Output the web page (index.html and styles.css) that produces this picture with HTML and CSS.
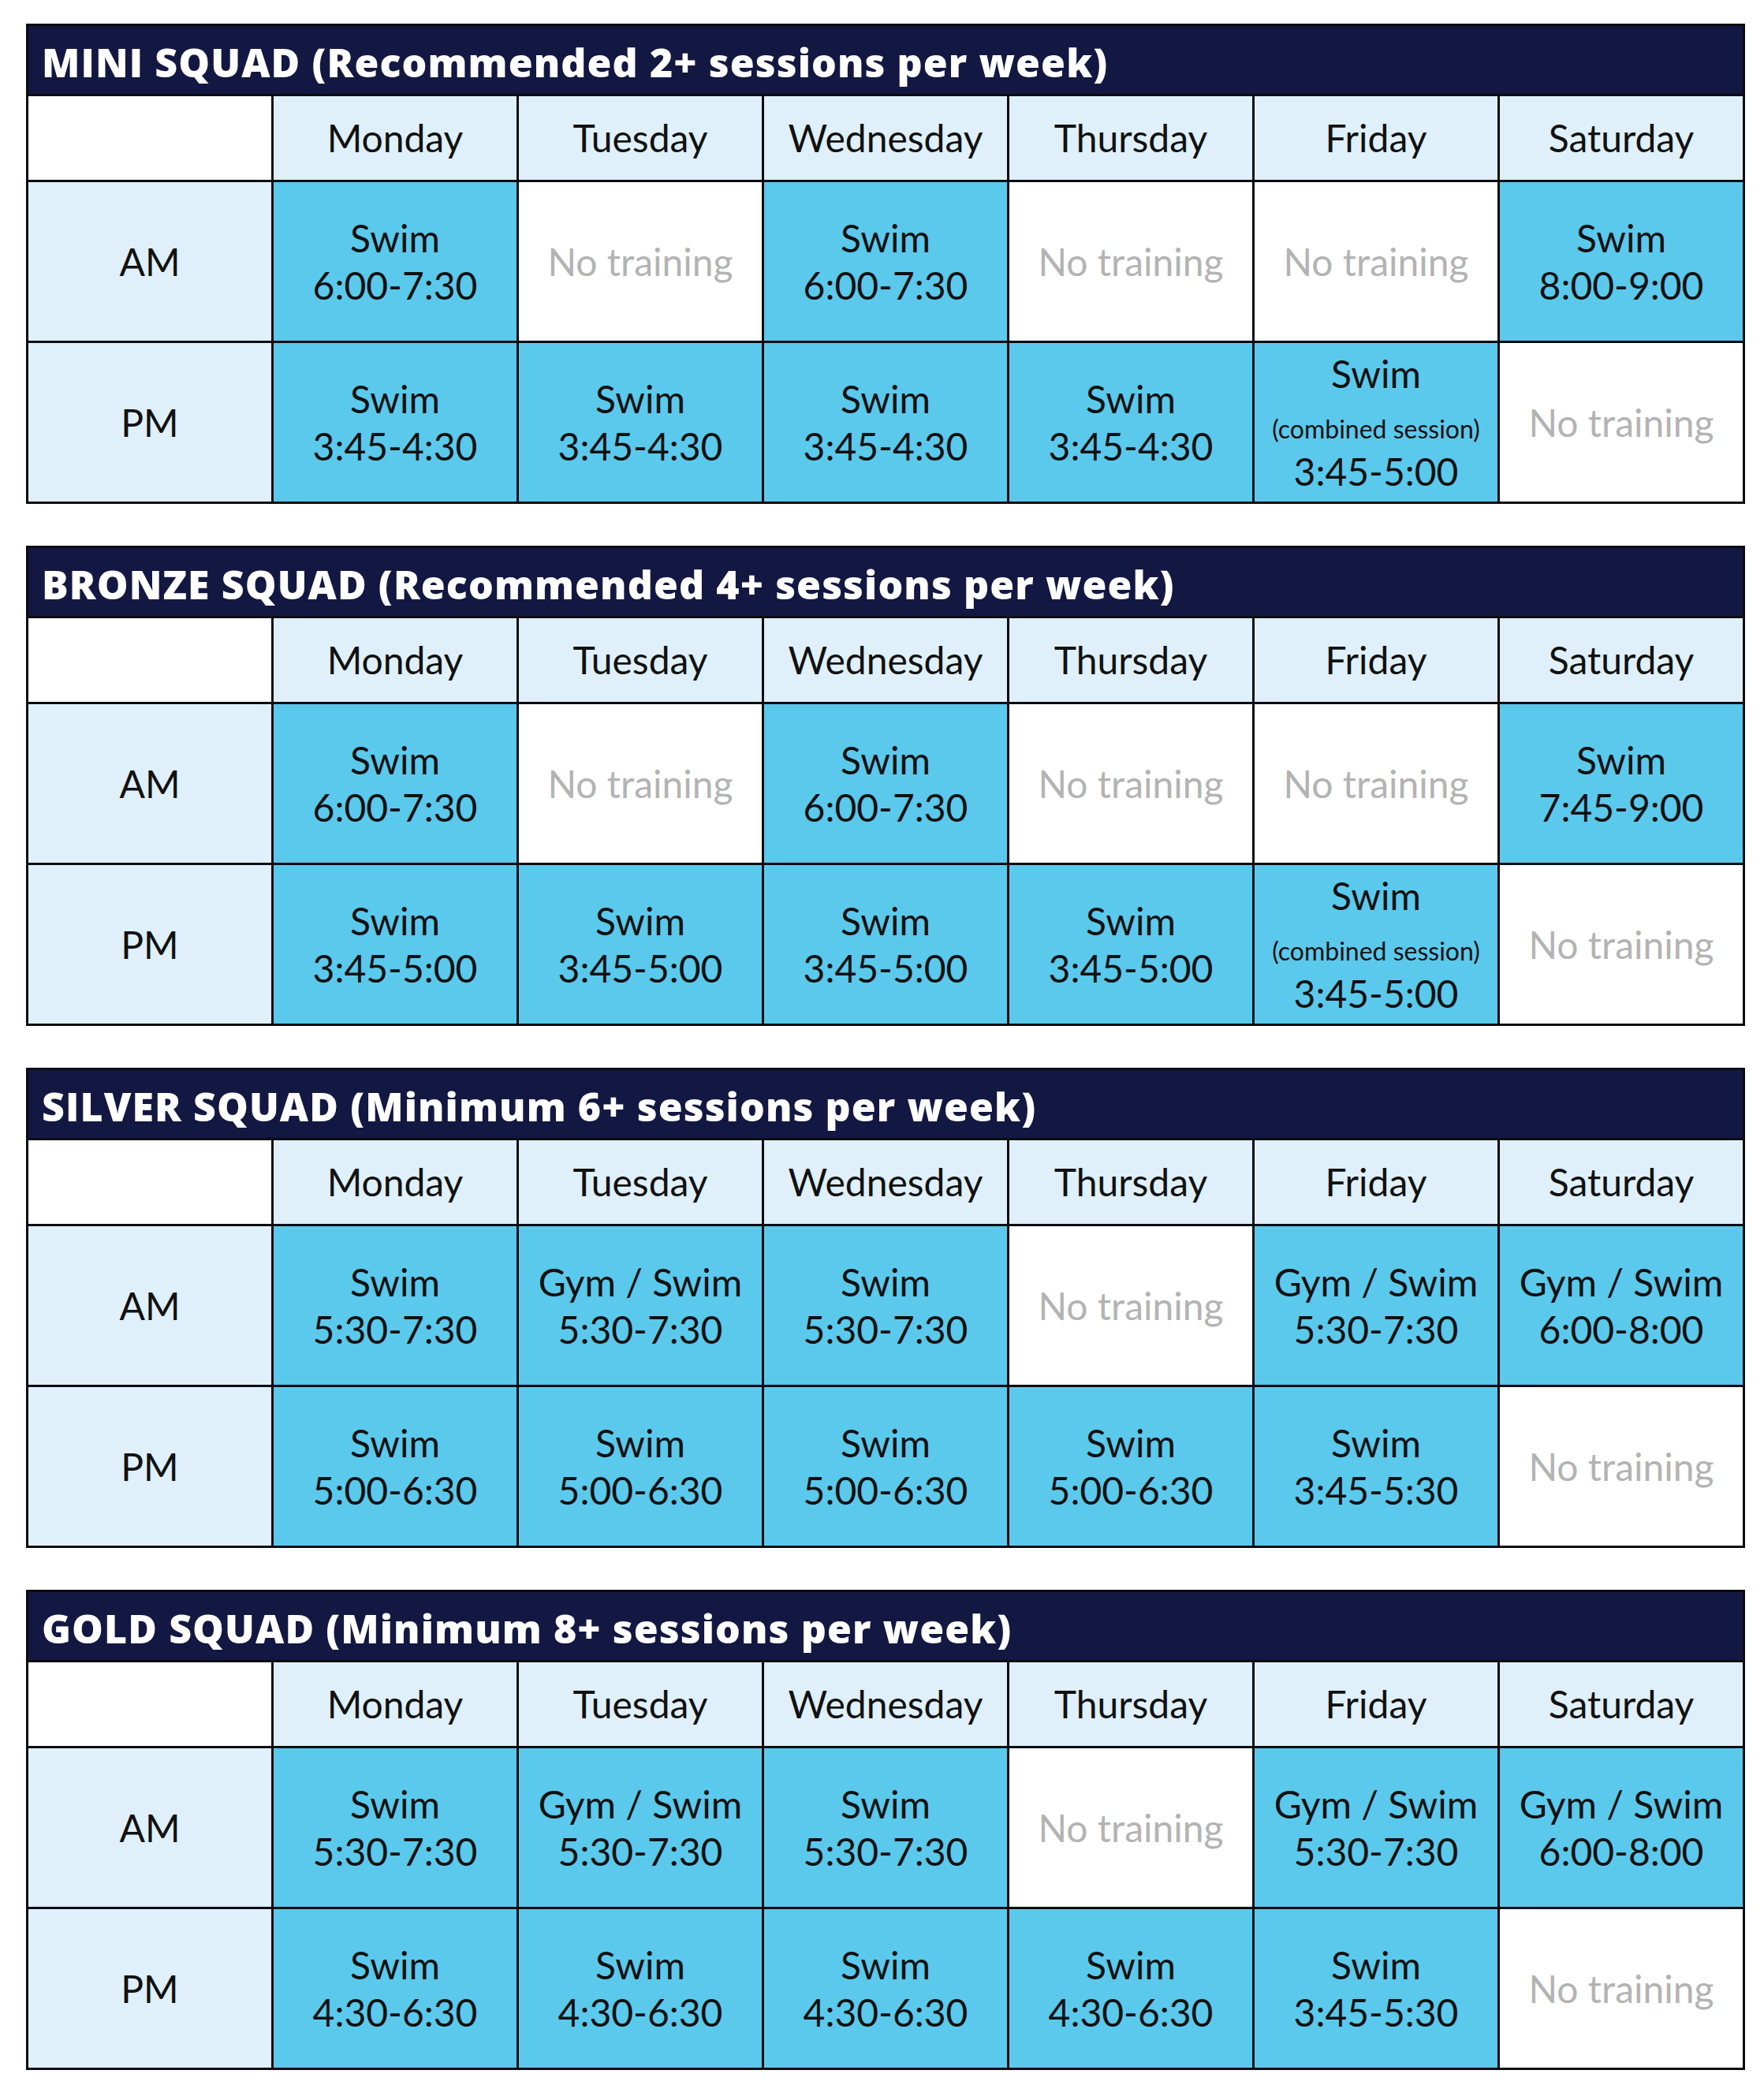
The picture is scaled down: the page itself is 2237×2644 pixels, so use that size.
FILE: index.html
```html
<!DOCTYPE html>
<html lang="en">
<head>
<meta charset="utf-8">
<title>Squad Training Timetable</title>
<link rel="stylesheet" href="styles.css">
</head>
<body>
<main class="page">

<section class="squad">
  <h2 class="squad-title">MINI SQUAD (Recommended 2+ sessions per week)</h2>
  <div class="cell corner"></div>
  <div class="cell day">Monday</div>
  <div class="cell day">Tuesday</div>
  <div class="cell day">Wednesday</div>
  <div class="cell day">Thursday</div>
  <div class="cell day">Friday</div>
  <div class="cell day">Saturday</div>

  <div class="cell period">AM</div>
  <div class="cell session"><span>Swim</span><span>6:00-7:30</span></div>
  <div class="cell none">No training</div>
  <div class="cell session"><span>Swim</span><span>6:00-7:30</span></div>
  <div class="cell none">No training</div>
  <div class="cell none">No training</div>
  <div class="cell session"><span>Swim</span><span>8:00-9:00</span></div>

  <div class="cell period">PM</div>
  <div class="cell session"><span>Swim</span><span>3:45-4:30</span></div>
  <div class="cell session"><span>Swim</span><span>3:45-4:30</span></div>
  <div class="cell session"><span>Swim</span><span>3:45-4:30</span></div>
  <div class="cell session"><span>Swim</span><span>3:45-4:30</span></div>
  <div class="cell session"><span>Swim</span><span class="note">(combined session)</span><span>3:45-5:00</span></div>
  <div class="cell none">No training</div>
</section>

<section class="squad">
  <h2 class="squad-title">BRONZE SQUAD (Recommended 4+ sessions per week)</h2>
  <div class="cell corner"></div>
  <div class="cell day">Monday</div>
  <div class="cell day">Tuesday</div>
  <div class="cell day">Wednesday</div>
  <div class="cell day">Thursday</div>
  <div class="cell day">Friday</div>
  <div class="cell day">Saturday</div>

  <div class="cell period">AM</div>
  <div class="cell session"><span>Swim</span><span>6:00-7:30</span></div>
  <div class="cell none">No training</div>
  <div class="cell session"><span>Swim</span><span>6:00-7:30</span></div>
  <div class="cell none">No training</div>
  <div class="cell none">No training</div>
  <div class="cell session"><span>Swim</span><span>7:45-9:00</span></div>

  <div class="cell period">PM</div>
  <div class="cell session"><span>Swim</span><span>3:45-5:00</span></div>
  <div class="cell session"><span>Swim</span><span>3:45-5:00</span></div>
  <div class="cell session"><span>Swim</span><span>3:45-5:00</span></div>
  <div class="cell session"><span>Swim</span><span>3:45-5:00</span></div>
  <div class="cell session"><span>Swim</span><span class="note">(combined session)</span><span>3:45-5:00</span></div>
  <div class="cell none">No training</div>
</section>

<section class="squad">
  <h2 class="squad-title">SILVER SQUAD (Minimum 6+ sessions per week)</h2>
  <div class="cell corner"></div>
  <div class="cell day">Monday</div>
  <div class="cell day">Tuesday</div>
  <div class="cell day">Wednesday</div>
  <div class="cell day">Thursday</div>
  <div class="cell day">Friday</div>
  <div class="cell day">Saturday</div>

  <div class="cell period">AM</div>
  <div class="cell session"><span>Swim</span><span>5:30-7:30</span></div>
  <div class="cell session"><span>Gym / Swim</span><span>5:30-7:30</span></div>
  <div class="cell session"><span>Swim</span><span>5:30-7:30</span></div>
  <div class="cell none">No training</div>
  <div class="cell session"><span>Gym / Swim</span><span>5:30-7:30</span></div>
  <div class="cell session"><span>Gym / Swim</span><span>6:00-8:00</span></div>

  <div class="cell period">PM</div>
  <div class="cell session"><span>Swim</span><span>5:00-6:30</span></div>
  <div class="cell session"><span>Swim</span><span>5:00-6:30</span></div>
  <div class="cell session"><span>Swim</span><span>5:00-6:30</span></div>
  <div class="cell session"><span>Swim</span><span>5:00-6:30</span></div>
  <div class="cell session"><span>Swim</span><span>3:45-5:30</span></div>
  <div class="cell none">No training</div>
</section>

<section class="squad">
  <h2 class="squad-title">GOLD SQUAD (Minimum 8+ sessions per week)</h2>
  <div class="cell corner"></div>
  <div class="cell day">Monday</div>
  <div class="cell day">Tuesday</div>
  <div class="cell day">Wednesday</div>
  <div class="cell day">Thursday</div>
  <div class="cell day">Friday</div>
  <div class="cell day">Saturday</div>

  <div class="cell period">AM</div>
  <div class="cell session"><span>Swim</span><span>5:30-7:30</span></div>
  <div class="cell session"><span>Gym / Swim</span><span>5:30-7:30</span></div>
  <div class="cell session"><span>Swim</span><span>5:30-7:30</span></div>
  <div class="cell none">No training</div>
  <div class="cell session"><span>Gym / Swim</span><span>5:30-7:30</span></div>
  <div class="cell session"><span>Gym / Swim</span><span>6:00-8:00</span></div>

  <div class="cell period">PM</div>
  <div class="cell session"><span>Swim</span><span>4:30-6:30</span></div>
  <div class="cell session"><span>Swim</span><span>4:30-6:30</span></div>
  <div class="cell session"><span>Swim</span><span>4:30-6:30</span></div>
  <div class="cell session"><span>Swim</span><span>4:30-6:30</span></div>
  <div class="cell session"><span>Swim</span><span>3:45-5:30</span></div>
  <div class="cell none">No training</div>
</section>

</main>
</body>
</html>
```

FILE: styles.css
```css
* { box-sizing: border-box; }

html, body {
  margin: 0;
  padding: 0;
  background: #ffffff;
}

body {
  font-family: "Lato", "Open Sans", sans-serif;
  color: #111111;
}

.page {
  display: flex;
  flex-direction: column;
  gap: 53px;
  padding: 30px 24px 19px 33px;
}

.squad {
  width: 2180px;
  display: grid;
  grid-template-columns: repeat(7, 1fr);
  grid-template-rows: 86px 106px 201px 201px;
  gap: 3px;
  padding: 3px;
  background: #0b0b12;
}

.squad-title {
  grid-column: 1 / -1;
  margin: 0;
  background: #131842;
  color: #ffffff;
  font-family: "Open Sans", "Lato", sans-serif;
  font-weight: 800;
  font-size: 50px;
  line-height: 1;
  display: flex;
  align-items: center;
  padding: 6px 0 0 17px;
  letter-spacing: 1.1px;
}

.cell {
  display: flex;
  flex-direction: column;
  align-items: center;
  justify-content: center;
  text-align: center;
  font-size: 48px;
  line-height: 60px;
  white-space: nowrap;
}

.corner { background: #ffffff; }

.day { background: #dff0fa; }

.period { background: #dff0fa; }

.session { background: #5bc9ec; }

.none {
  background: #ffffff;
  color: #b3b3b3;
}

.session .note {
  font-size: 32px;
  line-height: 36px;
  margin: 22px 0 6px;
}
```
